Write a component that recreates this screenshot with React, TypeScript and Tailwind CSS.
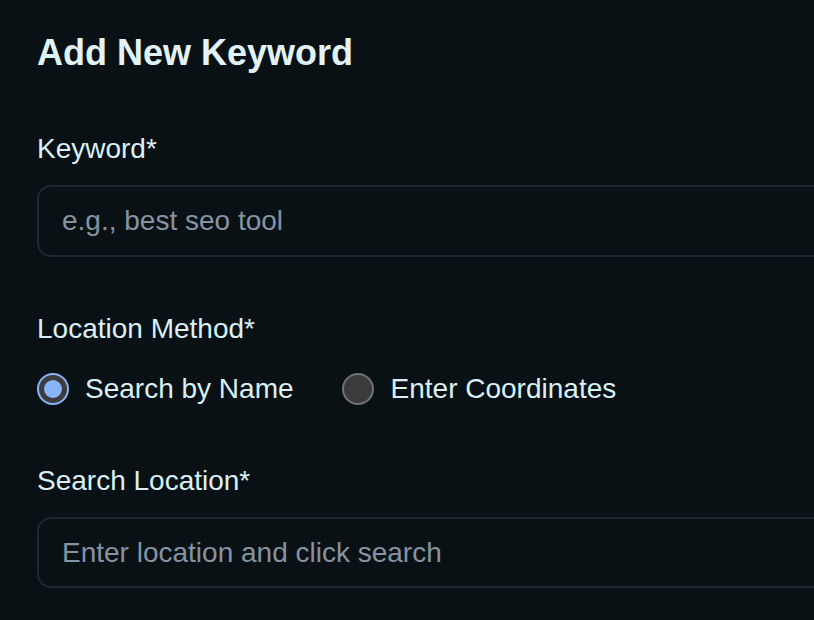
import React from "react";

export default function App() {
  return (
    <div
      className="w-[814px] h-[620px] overflow-hidden bg-[#0a1114]"
      style={{ fontFamily: '"Liberation Sans", Arial, sans-serif' }}
    >
      <div className="w-[1000px] pl-[37px] pt-[29px] flex flex-col">
        <h1 className="text-[36px] leading-[48px] font-bold text-[#e1f3f8]">Add New Keyword</h1>

        <div className="mt-[52px] flex flex-col">
          <label className="text-[28px] leading-[40px] text-[#daf0f7]">Keyword*</label>
          <input
            className="mt-[16px] h-[72px] w-full rounded-[14px] border-2 border-[#1a2b2e] bg-[#0a1114] px-[23px] text-[28px] text-[#daf0f7] placeholder:text-[#8593a3] outline-none"
            placeholder="e.g., best seo tool"
          />
        </div>

        <div className="mt-[52px] flex flex-col">
          <span className="text-[28px] leading-[40px] text-[#daf0f7]">Location Method*</span>
          <div className="mt-[20px] flex items-center h-[40px]">
            <div className="flex items-center gap-[16px]">
              <span className="w-[32px] h-[32px] rounded-full border-2 border-[#8ab4f8] bg-[#3c3c3c] flex items-center justify-center">
                <span className="w-[18px] h-[18px] rounded-full bg-[#8ab4f8]" />
              </span>
              <span className="text-[28px] leading-[40px] text-[#daf0f7]">Search by Name</span>
            </div>
            <div className="ml-[48px] flex items-center gap-[17px]">
              <span className="w-[32px] h-[32px] rounded-full border-2 border-[#6f7476] bg-[#3b3b3b]" />
              <span className="text-[28px] leading-[40px] text-[#daf0f7]">Enter Coordinates</span>
            </div>
          </div>
        </div>

        <div className="mt-[52px] flex flex-col">
          <label className="text-[28px] leading-[40px] text-[#daf0f7]">Search Location*</label>
          <input
            className="mt-[16px] h-[71px] w-full rounded-[14px] border-2 border-[#1a2b2e] bg-[#0a1114] px-[23px] text-[28px] text-[#daf0f7] placeholder:text-[#8593a3] outline-none"
            placeholder="Enter location and click search"
          />
        </div>
      </div>
    </div>
  );
}
